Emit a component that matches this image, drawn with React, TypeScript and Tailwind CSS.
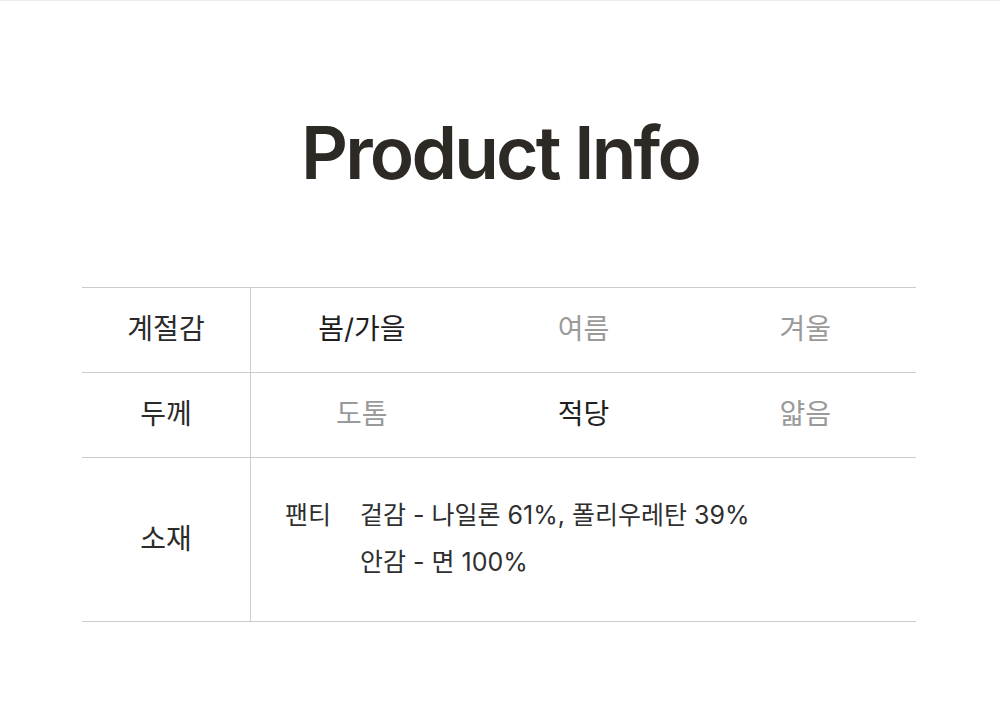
const font = "font-['Inter','Noto_Sans_CJK_KR',sans-serif]";

const rows = [
  { label: "계절감", options: ["봄/가을", "여름", "겨울"], active: 0 },
  { label: "두께", options: ["도톰", "적당", "얇음"], active: 1 },
];

export default function App() {
  return (
    <div className={`min-h-[728px] bg-white border-t border-[#ececec] ${font}`}>
      <h1 className="pt-[112px] text-center text-[73px] font-semibold leading-[80px] tracking-[-2.8px] text-[#2d2a25]">
        Product Info
      </h1>

      <div className="ml-[82px] mr-[84px] mt-[94px] border-t border-[#cccccc]">
        {rows.map((row) => (
          <div key={row.label} className="flex h-[85px] border-b border-[#cccccc]">
            <div className="flex w-[169px] items-center justify-center border-r border-[#cccccc] pb-[3px] text-[28px] text-[#2b2b2b]">
              {row.label}
            </div>
            <div className="grid flex-1 grid-cols-3">
              {row.options.map((opt, i) => (
                <div
                  key={opt}
                  className={`flex items-center justify-center pb-[3px] text-[28px] ${
                    i === row.active ? "text-[#1f1f1f]" : "text-[#9a9a9a]"
                  }`}
                >
                  {opt}
                </div>
              ))}
            </div>
          </div>
        ))}

        <div className="flex h-[164px] border-b border-[#cccccc]">
          <div className="flex w-[169px] items-center justify-center border-r border-[#cccccc] pb-[2px] text-[28px] text-[#2b2b2b]">
            소재
          </div>
          <div className="flex flex-1 items-center pl-[34px] text-[25px] leading-[47px] text-[#2f2f2f]">
            <div className="flex gap-[29px] pb-[2px]">
              <span>팬티</span>
              <div className="flex flex-col">
                <span>겉감 - 나일론 61%, 폴리우레탄 39%</span>
                <span>안감 - 면 100%</span>
              </div>
            </div>
          </div>
        </div>
      </div>
    </div>
  );
}
